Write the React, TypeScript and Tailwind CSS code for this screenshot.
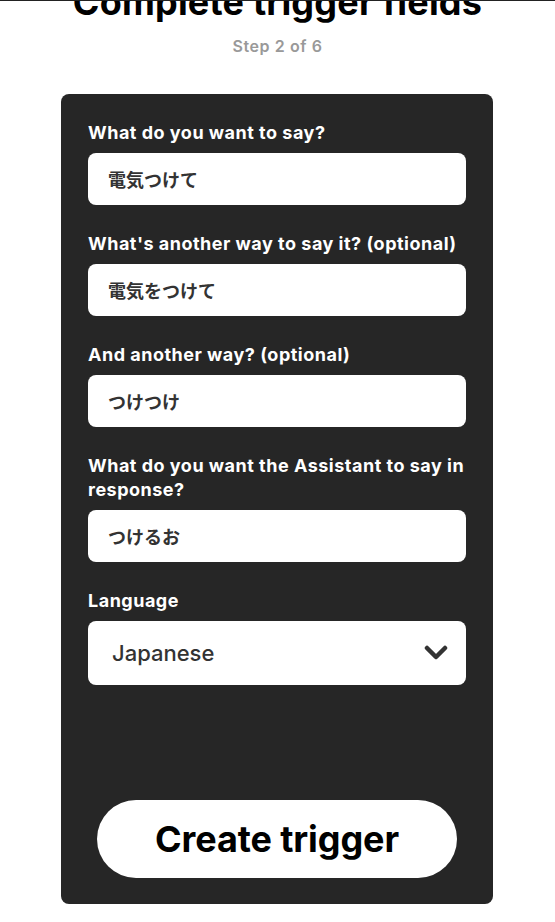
import React from "react";

const latin = "font-['Inter','Noto_Sans_CJK_JP',sans-serif]";

function Field({ label, value }: { label: React.ReactNode; value: string }) {
  return (
    <div className="flex flex-col">
      <label className="text-white font-bold text-[18px] leading-[24px] mb-2 tracking-[0.5px]">{label}</label>
      <div className="h-[52px] bg-white rounded-[8px] flex items-center pl-[20px]">
        <span className="font-['Noto_Sans_CJK_JP',sans-serif] font-bold text-[18px] text-[#333333]">{value}</span>
      </div>
    </div>
  );
}

export default function App() {
  return (
    <div className={`${latin} bg-white min-h-[922px] w-full overflow-hidden border-t border-[#222]`}>
      <div className="flex flex-col items-center">
        <h1 className="text-[36px] font-bold leading-[43px] text-black mt-[-20px] tracking-[0.2px] whitespace-nowrap">
          Complete trigger fields
        </h1>
        <p className="text-[16px] font-semibold text-[#999999] leading-[20px] mt-[12px] tracking-[0.6px]">Step 2 of 6</p>
        <div className="w-[432px] mr-[1px] bg-[#262626] rounded-[8px] mt-[38px] px-[27px] pt-[27px] pb-[26px] flex flex-col">
          <div className="flex flex-col gap-[27px]">
            <Field label="What do you want to say?" value="電気つけて" />
            <Field label="What's another way to say it? (optional)" value="電気をつけて" />
            <Field label="And another way? (optional)" value="つけつけ" />
            <Field label="What do you want the Assistant to say in response?" value="つけるお" />
            <div className="flex flex-col">
              <label className="text-white font-bold text-[18px] leading-[24px] mb-2 tracking-[0.5px]">Language</label>
              <div className="h-[64px] bg-white rounded-[8px] flex items-center justify-between pl-[24px] pr-[18px]">
                <span className="text-[22px] font-medium text-[#333333]">Japanese</span>
                <svg width="24" height="16" viewBox="0 0 24 16" fill="none">
                  <path d="M3 3 L12 12 L21 3" stroke="#333333" strokeWidth="4.5" strokeLinecap="round" strokeLinejoin="round" />
                </svg>
              </div>
            </div>
          </div>
          <button className="mt-[115px] self-center w-[360px] h-[78px] rounded-full bg-white text-black text-[36px] font-bold tracking-[-0.1px]">
            Create trigger
          </button>
        </div>
      </div>
    </div>
  );
}
